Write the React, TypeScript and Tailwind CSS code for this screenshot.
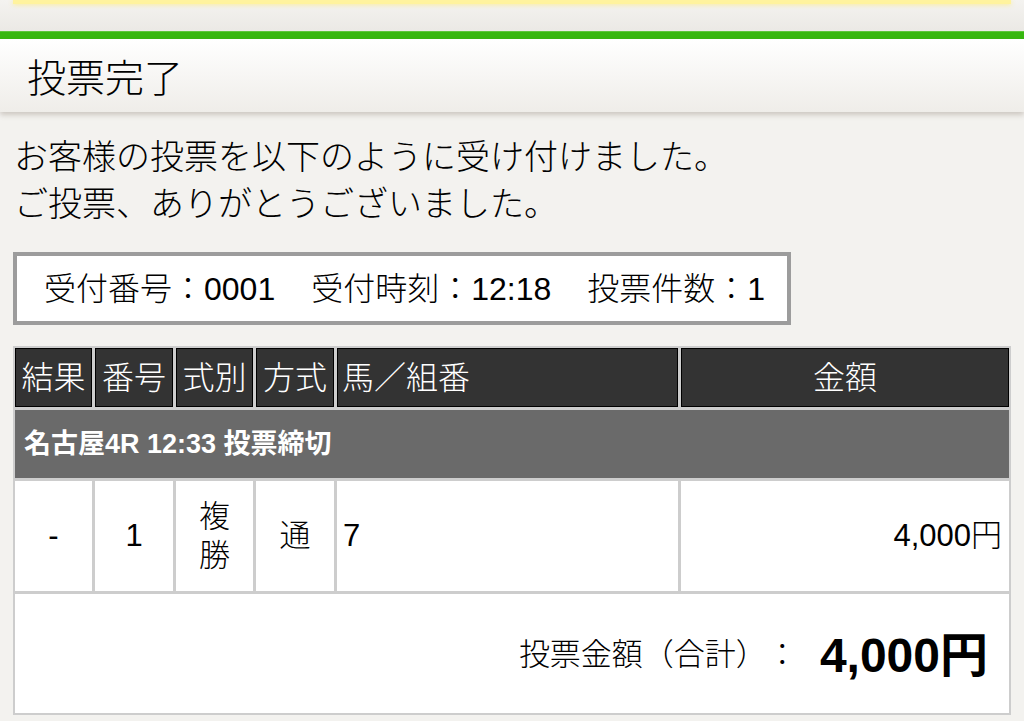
const font = "font-['Liberation_Sans','Noto_Sans_CJK_JP',sans-serif]"

const headers = [
  { label: '結果', align: 'justify-center' },
  { label: '番号', align: 'justify-center' },
  { label: '式別', align: 'justify-center' },
  { label: '方式', align: 'justify-center' },
  { label: '馬／組番', align: 'justify-start pl-[4px]' },
  { label: '金額', align: 'justify-center' },
]

function App() {
  return (
    <div className={`${font} font-light [text-spacing-trim:space-all] min-h-screen bg-[#f3f2ef] text-black`}>
      {/* top strip */}
      <div className="h-[31px] bg-linear-to-b from-[#f4f3f0] to-[#ebe9e5]">
        <div className="mx-[13px] h-[4px] bg-[#fff39e] shadow-[0_1px_4px_rgba(255,235,120,0.7)]" />
      </div>
      <div className="h-[8px] bg-[#37b70f] border-t border-[#5cc63a]" />

      {/* title bar */}
      <div className="h-[73px] flex items-center pl-[27px] pt-[5px] bg-linear-to-b from-white to-[#efede9] shadow-[0_3px_5px_rgba(110,95,80,0.28)]">
        <h1 className="text-[39px] leading-none">投票完了</h1>
      </div>

      <p className="mt-[22px] px-[14px] text-[34px] leading-[47px]">
        お客様の投票を以下のように受け付けました。
        <br />
        ご投票、ありがとうございました。
      </p>

      <div className="mt-[24px] ml-[13px] w-[778px] h-[73px] border-4 border-[#9c9c9c] bg-white flex items-center gap-[36px] pl-[27px] text-[32px] leading-none">
        <span>受付番号：0001</span>
        <span>受付時刻：12:18</span>
        <span>投票件数：1</span>
      </div>

      {/* ticket table */}
      <div className="mt-[21px] ml-[13px] w-[998px] bg-[#cdcdcd] p-[2px] grid grid-cols-[77px_78px_77px_78px_341px_1fr] gap-[3px]">
        {headers.map((h) => (
          <div
            key={h.label}
            className={`h-[59px] bg-[#333333] border border-black flex items-center ${h.align} text-white text-[32px] leading-none`}
          >
            {h.label}
          </div>
        ))}

        <div className="col-span-6 h-[68px] bg-[#6a6a6a] flex items-center pl-[9px] text-white font-bold text-[27px] leading-none">
          名古屋4R 12:33 投票締切
        </div>

        <div className="h-[110px] bg-white flex items-center justify-center text-[31px]">-</div>
        <div className="h-[110px] bg-white flex items-center justify-center text-[31px]">1</div>
        <div className="h-[110px] bg-white flex flex-col items-center justify-center text-[31px] leading-[39px]">
          <span>複</span>
          <span>勝</span>
        </div>
        <div className="h-[110px] bg-white flex items-center justify-center text-[31px]">通</div>
        <div className="h-[110px] bg-white flex items-center pl-[6px] text-[31px]">7</div>
        <div className="h-[110px] bg-white flex items-center justify-end pr-[7px] text-[31px]">4,000円</div>

        <div className="col-span-6 h-[119px] bg-white flex items-center justify-end pr-[21px] pt-[4px]">
          <span className="text-[31px]">投票金額（合計）：</span>
          <span className="ml-[22px] text-[48px] font-bold leading-none">4,000円</span>
        </div>
      </div>
    </div>
  )
}

export default App
